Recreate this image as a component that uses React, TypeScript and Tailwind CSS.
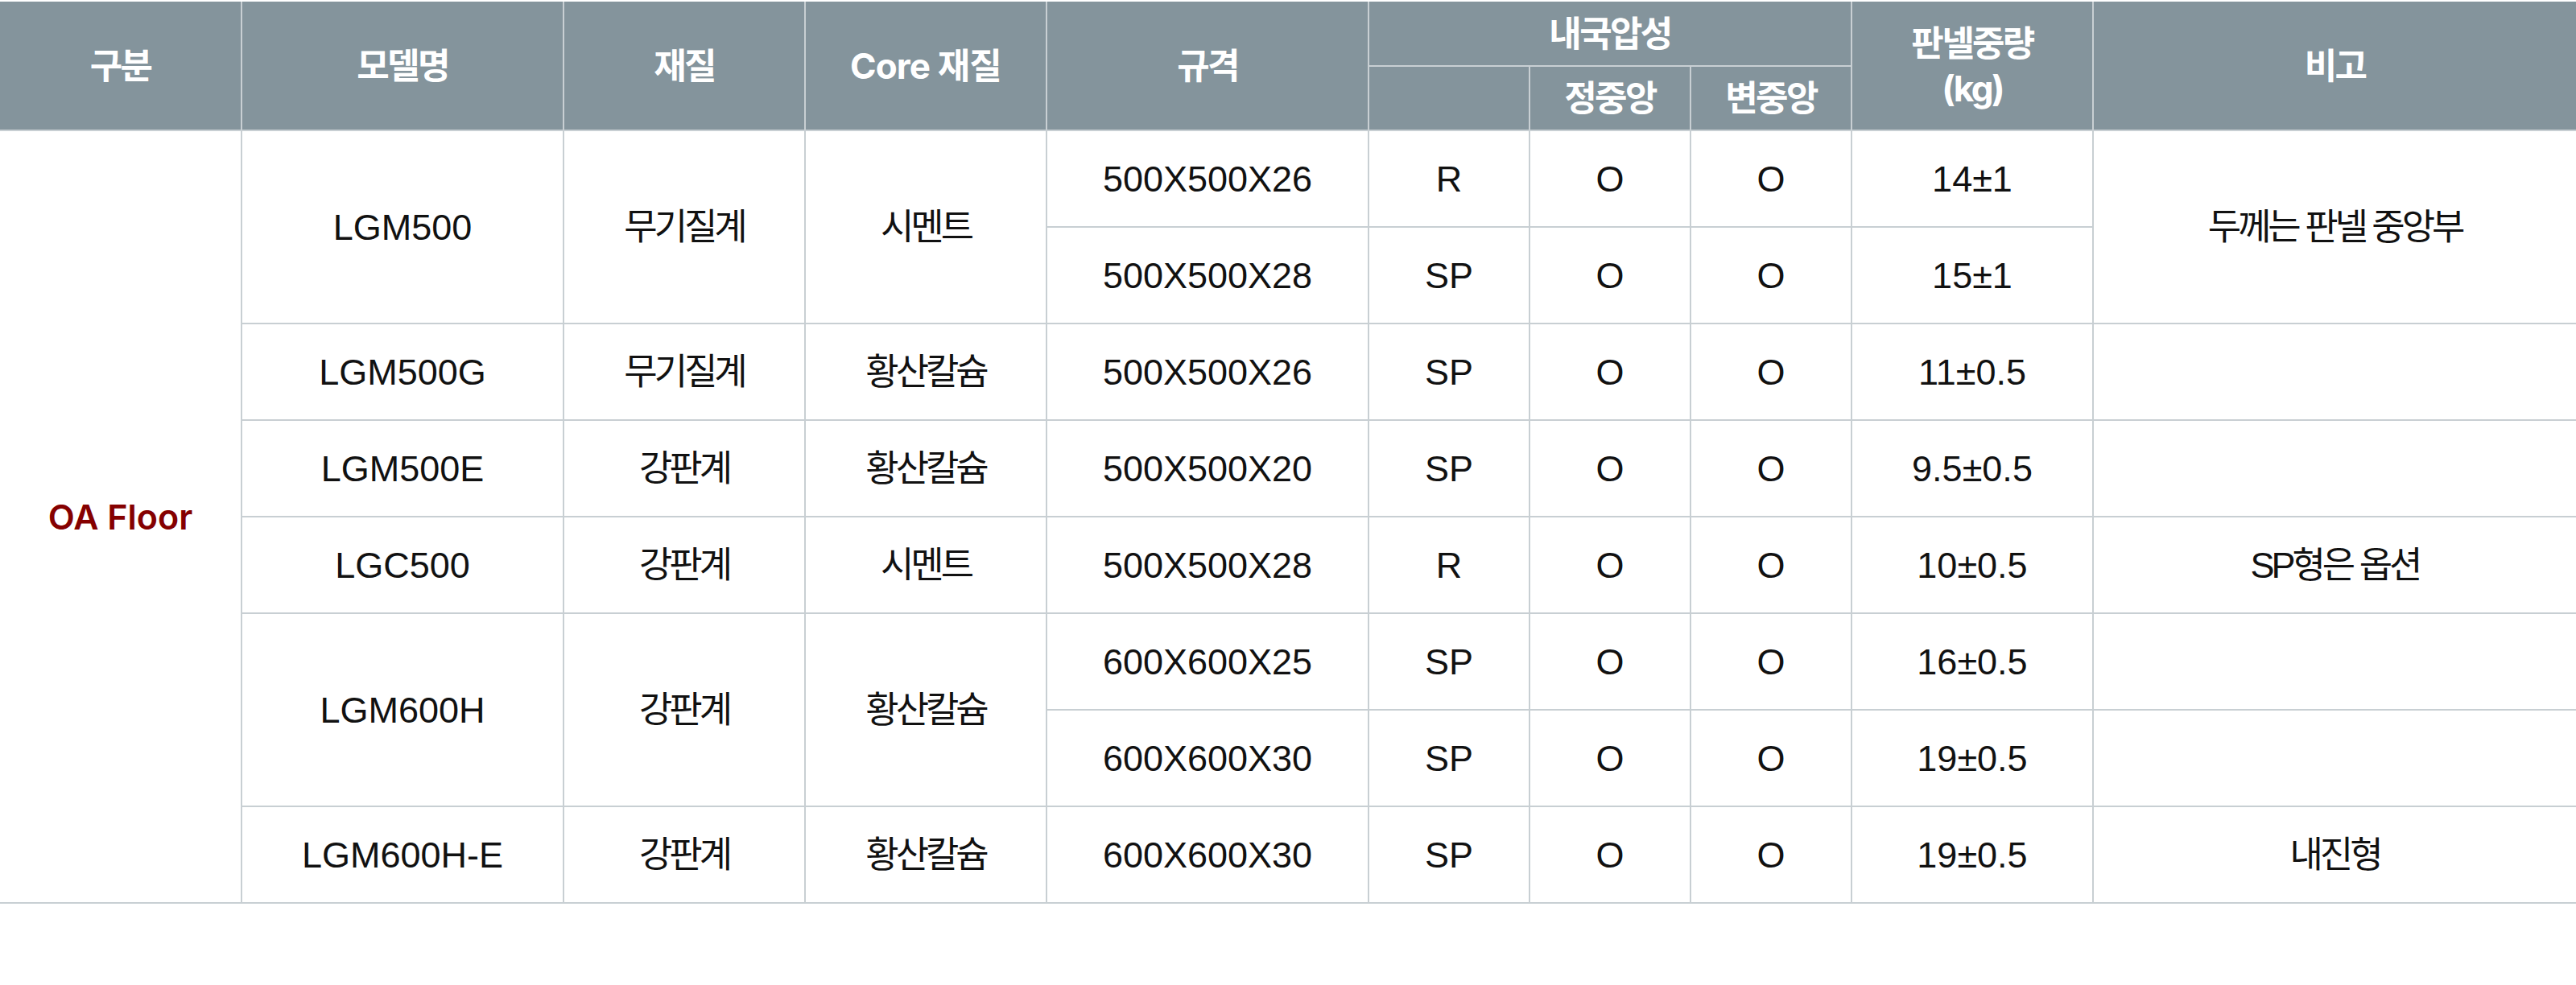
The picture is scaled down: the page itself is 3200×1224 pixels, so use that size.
import React from 'react';

type Cell = { text: string; rowSpan?: number };

const HANGUL = /[\uac00-\ud7a3]/;

// body rows, spanned cells are only listed in the row where they start
const rows: Cell[][] = [
  [
    { text: 'LGM500', rowSpan: 2 },
    { text: '무기질계', rowSpan: 2 },
    { text: '시멘트', rowSpan: 2 },
    { text: '500X500X26' },
    { text: 'R' },
    { text: 'O' },
    { text: 'O' },
    { text: '14±1' },
    { text: '두께는 판넬 중앙부', rowSpan: 2 },
  ],
  [{ text: '500X500X28' }, { text: 'SP' }, { text: 'O' }, { text: 'O' }, { text: '15±1' }],
  [
    { text: 'LGM500G' },
    { text: '무기질계' },
    { text: '황산칼슘' },
    { text: '500X500X26' },
    { text: 'SP' },
    { text: 'O' },
    { text: 'O' },
    { text: '11±0.5' },
    { text: '' },
  ],
  [
    { text: 'LGM500E' },
    { text: '강판계' },
    { text: '황산칼슘' },
    { text: '500X500X20' },
    { text: 'SP' },
    { text: 'O' },
    { text: 'O' },
    { text: '9.5±0.5' },
    { text: '' },
  ],
  [
    { text: 'LGC500' },
    { text: '강판계' },
    { text: '시멘트' },
    { text: '500X500X28' },
    { text: 'R' },
    { text: 'O' },
    { text: 'O' },
    { text: '10±0.5' },
    { text: 'SP형은 옵션' },
  ],
  [
    { text: 'LGM600H', rowSpan: 2 },
    { text: '강판계', rowSpan: 2 },
    { text: '황산칼슘', rowSpan: 2 },
    { text: '600X600X25' },
    { text: 'SP' },
    { text: 'O' },
    { text: 'O' },
    { text: '16±0.5' },
    { text: '' },
  ],
  [{ text: '600X600X30' }, { text: 'SP' }, { text: 'O' }, { text: 'O' }, { text: '19±0.5' }, { text: '' }],
  [
    { text: 'LGM600H-E' },
    { text: '강판계' },
    { text: '황산칼슘' },
    { text: '600X600X30' },
    { text: 'SP' },
    { text: 'O' },
    { text: 'O' },
    { text: '19±0.5' },
    { text: '내진형' },
  ],
];

const colWidths = ['w-[300px]', 'w-[400px]', 'w-[300px]', 'w-[300px]', 'w-[400px]', 'w-[200px]', 'w-[200px]', 'w-[200px]', 'w-[300px]', 'w-[600px]'];

const th = 'border-2 border-[#c8cfd3] border-t-0 bg-[#84949c] text-center align-middle font-bold text-white text-[44px] leading-none';
const td = 'border-2 border-[#c8cfd3] text-center align-middle text-[45px] leading-none text-[#111]';

function BodyCell({ cell, last }: { cell: Cell; last: boolean }) {
  const korean = HANGUL.test(cell.text);
  return (
    <td rowSpan={cell.rowSpan} className={`${td} ${last ? 'border-r-0' : ''} ${korean ? 'tracking-[-0.09em]' : ''}`}>
      {cell.text}
    </td>
  );
}

export default function App() {
  return (
    <div className="w-[3200px] h-[1224px] bg-white pt-[2px] font-['Liberation_Sans','Noto_Sans_CJK_KR',sans-serif]">
      <table className="w-[3200px] table-fixed border-collapse">
        <colgroup>
          {colWidths.map((w, i) => (
            <col key={i} className={w} />
          ))}
        </colgroup>
        <thead className="font-['Inter','Noto_Sans_CJK_KR',sans-serif]">
          <tr className="h-[80px]">
            <th rowSpan={2} className={`${th} border-l-0 tracking-[-0.06em]`}>구분</th>
            <th rowSpan={2} className={`${th} tracking-[-0.06em]`}>모델명</th>
            <th rowSpan={2} className={`${th} tracking-[-0.06em]`}>재질</th>
            <th rowSpan={2} className={`${th} tracking-[-0.02em]`}>Core 재질</th>
            <th rowSpan={2} className={`${th} tracking-[-0.06em]`}>규격</th>
            <th colSpan={3} className={`${th} tracking-[-0.06em]`}>내국압성</th>
            <th rowSpan={2} className={`${th} tracking-[-0.06em]`}>
              <div className="flex flex-col items-center gap-[12px]">
                <span className="block leading-none">판넬중량</span>
                <span className="block leading-none">(kg)</span>
              </div>
            </th>
            <th rowSpan={2} className={`${th} border-r-0 tracking-[-0.06em]`}>비고</th>
          </tr>
          <tr className="h-[80px]">
            <th className={th}></th>
            <th className={`${th} tracking-[-0.06em]`}>정중앙</th>
            <th className={`${th} tracking-[-0.06em]`}>변중앙</th>
          </tr>
        </thead>
        <tbody>
          {rows.map((row, r) => (
            <tr key={r} className="h-[120px]">
              {r === 0 && (
                <td
                  rowSpan={rows.length}
                  className="border-2 border-l-0 border-[#c8cfd3] text-center align-middle font-['Inter',sans-serif] text-[43px] font-semibold leading-none text-[#850000]"
                >
                  OA Floor
                </td>
              )}
              {row.map((cell, c) => (
                // row 1 has no 비고 cell (spanned from row 0)
                <BodyCell key={c} cell={cell} last={r !== 1 && c === row.length - 1} />
              ))}
            </tr>
          ))}
        </tbody>
      </table>
    </div>
  );
}
